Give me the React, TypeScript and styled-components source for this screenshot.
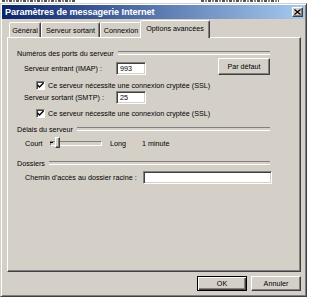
import styled, { createGlobalStyle } from "styled-components";

const GlobalStyle = createGlobalStyle`
    html, body {
        margin: 0;
        padding: 0;
        background: #ffffff;
    }
    * {
        box-sizing: border-box;
    }
`;

const Desktop = styled.div`
    width: 309px;
    height: 300px;
    overflow: hidden;
    background: #ffffff;
    font-family: "Liberation Sans", Arial, sans-serif;
    font-size: 7.2px;
    color: #000000;
`;

// bottoms of the text lines of the window behind, only a sliver shows
const BehindStrip = styled.div`
    height: 3px;
    display: flex;
    justify-content: space-between;
    align-items: flex-start;
    padding: 0 30px 0 2px;
`;

const BehindInk = styled.div<{ $w: number }>`
    width: ${(p) => p.$w}px;
    height: 2px;
    background: repeating-linear-gradient(
        to right,
        #555 0 3px,
        transparent 3px 4px,
        #888 4px 6px,
        transparent 6px 7px
    );
`;

const Window = styled.div`
    width: 307px;
    height: 294px;
    background: #d4d0c8;
    border: 1px solid;
    border-color: #d4d0c8 #404040 #404040 #d4d0c8;
    box-shadow: inset 1px 1px #ffffff, inset -1px -1px #808080;
    padding: 1px;
    display: flex;
    flex-direction: column;
`;

const TitleBar = styled.div`
    height: 14px;
    background: linear-gradient(to right, #0a246a, #a6caf0);
    display: flex;
    align-items: center;
    justify-content: space-between;
    padding: 0 2px 0 3px;
    color: #ffffff;
    font-weight: bold;
    font-size: 9.2px;
    letter-spacing: -0.1px;
`;

const CloseButton = styled.div`
    width: 11px;
    height: 10px;
    background: #d4d0c8;
    border: 1px solid;
    border-color: #ffffff #404040 #404040 #ffffff;
    box-shadow: inset -1px -1px #808080;
    display: flex;
    align-items: center;
    justify-content: center;
`;

const Body = styled.div`
    flex: 1;
    display: flex;
    flex-direction: column;
    padding: 1px 4px 0 5px;
`;

const TabRow = styled.div`
    display: flex;
    align-items: flex-end;
    height: 17px;
    padding-left: 2px;
    position: relative;
    z-index: 1;
`;

const Tab = styled.div<{ $active?: boolean; $w: number }>`
    width: ${(p) => p.$w}px;
    height: ${(p) => (p.$active ? 18 : 15)}px;
    margin: ${(p) => (p.$active ? "0 -1px -1px -2px" : "0")};
    background: #d4d0c8;
    border: 1px solid;
    border-bottom: none;
    border-color: #ffffff #404040 transparent #ffffff;
    border-radius: 2px 2px 0 0;
    box-shadow: inset -1px 0 #808080;
    display: flex;
    align-items: ${(p) => (p.$active ? "flex-start" : "center")};
    padding-top: ${(p) => (p.$active ? "3px" : "0")};
    justify-content: center;
    white-space: nowrap;
`;

const Panel = styled.div`
    width: 294px;
    height: 235px;
    border: 1px solid;
    border-color: #ffffff #404040 #404040 #ffffff;
    box-shadow: inset -1px -1px #808080;
    padding: 5px 30px 0 9px;
    display: flex;
    flex-direction: column;
`;

const GroupHeader = styled.div<{ $mt: number }>`
    display: flex;
    align-items: center;
    height: 10px;
    margin-top: ${(p) => p.$mt}px;
    gap: 4px;
    white-space: nowrap;

    &::after {
        content: "";
        flex: 1;
        height: 2px;
        border-top: 1px solid #808080;
        border-bottom: 1px solid #ffffff;
    }
`;

const Row = styled.div<{ $mt: number; $h: number; $indent: number }>`
    display: flex;
    align-items: center;
    height: ${(p) => p.$h}px;
    margin-top: ${(p) => p.$mt}px;
    padding-left: ${(p) => p.$indent}px;
    white-space: nowrap;
`;

const Label = styled.span<{ $w?: number }>`
    width: ${(p) => (p.$w ? `${p.$w}px` : "auto")};
    flex-shrink: 0;
    align-self: flex-end;
    line-height: 13px;
`;

const FixedText = styled.span<{ $w: number }>`
    width: ${(p) => p.$w}px;
    flex-shrink: 0;
`;

const TextInput = styled.div<{ $w: number; $mr?: number }>`
    width: ${(p) => p.$w}px;
    height: 13px;
    margin-right: ${(p) => p.$mr ?? 0}px;
    align-self: flex-end;
    background: #ffffff;
    border: 1px solid;
    border-color: #808080 #ffffff #ffffff #808080;
    box-shadow: inset 1px 1px #404040, inset -1px -1px #d4d0c8;
    padding: 0 3px;
    line-height: 11px;
`;

const PushButton = styled.div<{ $w: number; $h: number; $default?: boolean }>`
    width: ${(p) => p.$w}px;
    height: ${(p) => p.$h}px;
    background: #d4d0c8;
    border: 1px solid;
    border-color: ${(p) =>
        p.$default ? "#000000" : "#ffffff #404040 #404040 #ffffff"};
    box-shadow: ${(p) =>
        p.$default
            ? "inset 1px 1px #ffffff, inset -1px -1px #404040, inset -2px -2px #808080"
            : "inset -1px -1px #808080"};
    display: flex;
    align-items: center;
    justify-content: center;
    flex-shrink: 0;
`;

const Spacer = styled.div`
    flex: 1;
`;

const CheckBox = styled.div`
    width: 9px;
    height: 9px;
    background: #ffffff;
    border: 1px solid;
    border-color: #808080 #ffffff #ffffff #808080;
    box-shadow: inset 1px 1px #404040;
    display: flex;
    align-items: center;
    justify-content: center;
    margin-right: 3px;
    flex-shrink: 0;
`;

const SliderTrack = styled.div`
    width: 52px;
    height: 14px;
    margin: 0 8px 0 7px;
    display: flex;
    align-items: center;
    position: relative;

    &::before {
        content: "";
        flex: 1;
        height: 3px;
        border: 1px solid;
        border-color: #808080 #ffffff #ffffff #808080;
    }
`;

const SliderThumb = styled.div`
    position: absolute;
    left: 5px;
    top: 1px;
    width: 5px;
    height: 11px;
    background: #d4d0c8;
    border: 1px solid;
    border-color: #ffffff #404040 #404040 #ffffff;
    box-shadow: inset -1px -1px #808080;
`;

const SliderTick = styled.div`
    position: absolute;
    left: 0;
    top: 6px;
    width: 3px;
    height: 1px;
    background: #000000;
`;

const Footer = styled.div`
    display: flex;
    justify-content: flex-end;
    gap: 4px;
    margin-top: 4px;
`;

const Check = () => (
    <svg width="7" height="7" viewBox="0 0 7 7">
        <path d="M0.5 3 L2.5 5 L6.5 1" stroke="#000" strokeWidth="1.4" fill="none" />
    </svg>
);

const App = () => {
    return (
        <>
            <GlobalStyle />
            <Desktop>
                <BehindStrip>
                    <BehindInk $w={74} />
                    <BehindInk $w={78} />
                </BehindStrip>
                <Window>
                    <TitleBar>
                        <span>Paramètres de messagerie Internet</span>
                        <CloseButton>
                            <svg width="7" height="6" viewBox="0 0 7 6">
                                <path d="M0.5 0.5 L6.5 5.5 M6.5 0.5 L0.5 5.5" stroke="#000" strokeWidth="1.3" />
                            </svg>
                        </CloseButton>
                    </TitleBar>
                    <Body>
                        <TabRow>
                            <Tab $w={32}>Général</Tab>
                            <Tab $w={59}>Serveur sortant</Tab>
                            <Tab $w={42}>Connexion</Tab>
                            <Tab $w={70} $active>
                                Options avancées
                            </Tab>
                        </TabRow>
                        <Panel>
                            <GroupHeader $mt={5}>Numéros des ports du serveur</GroupHeader>
                            <Row $mt={0} $h={17} $indent={7}>
                                <Label $w={92}>Serveur entrant (IMAP) :</Label>
                                <TextInput $w={30}>993</TextInput>
                                <Spacer />
                                <PushButton $w={52} $h={17}>
                                    Par défaut
                                </PushButton>
                            </Row>
                            <Row $mt={5} $h={11} $indent={19}>
                                <CheckBox>
                                    <Check />
                                </CheckBox>
                                Ce serveur nécessite une connexion cryptée (SSL)
                            </Row>
                            <Row $mt={0} $h={13} $indent={7}>
                                <Label $w={92}>Serveur sortant (SMTP) :</Label>
                                <TextInput $w={30}>25</TextInput>
                            </Row>
                            <Row $mt={4} $h={11} $indent={19}>
                                <CheckBox>
                                    <Check />
                                </CheckBox>
                                Ce serveur nécessite une connexion cryptée (SSL)
                            </Row>
                            <GroupHeader $mt={5}>Délais du serveur</GroupHeader>
                            <Row $mt={2} $h={14} $indent={8}>
                                <FixedText $w={18}>Court</FixedText>
                                <SliderTrack>
                                    <SliderTick />
                                    <SliderThumb />
                                </SliderTrack>
                                <FixedText $w={32}>Long</FixedText>
                                1 minute
                            </Row>
                            <GroupHeader $mt={8}>Dossiers</GroupHeader>
                            <Row $mt={3} $h={13} $indent={8}>
                                <Label $w={118}>Chemin d'accès au dossier racine :</Label>
                                <TextInput $w={130} $mr={-2} />
                            </Row>
                        </Panel>
                        <Footer>
                            <PushButton $w={50} $h={15} $default>
                                OK
                            </PushButton>
                            <PushButton $w={50} $h={15}>
                                Annuler
                            </PushButton>
                        </Footer>
                    </Body>
                </Window>
            </Desktop>
        </>
    );
};

export default App;
